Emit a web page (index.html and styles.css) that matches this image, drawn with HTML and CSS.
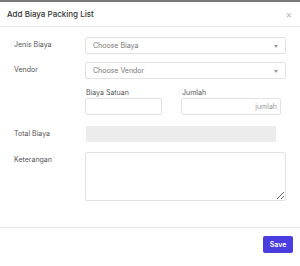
FILE: index.html
```html
<!DOCTYPE html>
<html lang="en">
<head>
  <meta charset="UTF-8">
  <title>Add Biaya Packing List</title>
  <link rel="stylesheet" href="styles.css">
</head>
<body>
  <div class="modal">
    <div class="modal-header">
      <span class="modal-title">Add Biaya Packing List</span>
      <span class="close">&times;</span>
    </div>
    <div class="modal-body">
      <div class="row">
        <label>Jenis Biaya</label>
        <div class="select"><span>Choose Biaya</span></div>
      </div>
      <div class="row">
        <label>Vendor</label>
        <div class="select"><span>Choose Vendor</span></div>
      </div>
      <div class="row">
        <label></label>
        <div class="pair">
          <div class="field">
            <span class="sub-label">Biaya Satuan</span>
            <input type="text" class="input">
          </div>
          <div class="field">
            <span class="sub-label">Jumlah</span>
            <input type="text" class="input right" placeholder="jumlah">
          </div>
        </div>
      </div>
      <div class="row row-total">
        <label>Total Biaya</label>
        <div class="readonly"></div>
      </div>
      <div class="row row-last">
        <label>Keterangan</label>
        <textarea class="textarea"></textarea>
      </div>
    </div>
    <div class="modal-footer">
      <button class="btn-save">Save</button>
    </div>
  </div>
</body>
</html>
```

FILE: styles.css
```css
* {
  box-sizing: border-box;
  font-family: Inter, 'Noto Sans', sans-serif;
}
body {
  margin: 0;
  background: #fff;
  color: #444;
}
.modal {
  border-top: 2px solid #7a7a7a;
  height: 266px;
}
.modal-header {
  display: flex;
  justify-content: space-between;
  align-items: center;
  height: 25px;
  padding: 0 7px;
  border-bottom: 1px solid #e6e6e6;
}
.modal-title {
  font-size: 8px;
  font-weight: 500;
  color: #333;
}
.close {
  font-size: 10px;
  color: #b5b5b5;
  margin-right: 1px;
}
.modal-body {
  padding: 10px 14px 26px 14px;
  border-bottom: 1px solid #e6e6e6;
}
.row {
  display: grid;
  grid-template-columns: 71px 1fr;
  margin-bottom: 8px;
}
.row label {
  font-size: 7px;
  color: #555;
  padding-top: 3px;
}
.select {
  position: relative;
  height: 17px;
  border: 1px solid #e2e2e2;
  border-radius: 2px;
  padding-left: 7px;
  font-size: 7px;
  color: #777;
  display: flex;
  align-items: center;
}
.select::after {
  content: '';
  position: absolute;
  right: 7px;
  top: 7px;
  border-left: 2px solid transparent;
  border-right: 2px solid transparent;
  border-top: 3px solid #999;
}
.pair {
  display: grid;
  grid-template-columns: 77px 100px;
  column-gap: 19px;
  margin-top: 1px;
}
.field {
  display: flex;
  flex-direction: column;
}
.sub-label {
  font-size: 7px;
  color: #555;
  height: 10px;
  padding-left: 1px;
}
.input {
  height: 17px;
  border: 1px solid #e2e2e2;
  border-radius: 2px;
  font-size: 7px;
  padding: 0 3px;
  outline: none;
}
.input.right {
  text-align: right;
}
.input::placeholder {
  color: #9a9a9a;
}
.row-total {
  margin-top: 11px;
  margin-bottom: 10px;
}
.row-last {
  margin-bottom: 0;
}
.readonly {
  width: 190px;
  height: 16px;
  margin-left: 1px;
  background: #ececec;
  border-radius: 1px;
}
.textarea {
  height: 49px;
  border: 1px solid #e2e2e2;
  border-radius: 2px;
  resize: vertical;
  outline: none;
}
.modal-footer {
  display: flex;
  justify-content: flex-end;
  padding: 8px 7px;
}
.btn-save {
  width: 30px;
  height: 17px;
  padding: 0;
  border: none;
  border-radius: 2px;
  background: #4a3de0;
  color: #fff;
  font-size: 7px;
  font-weight: 600;
}
```
